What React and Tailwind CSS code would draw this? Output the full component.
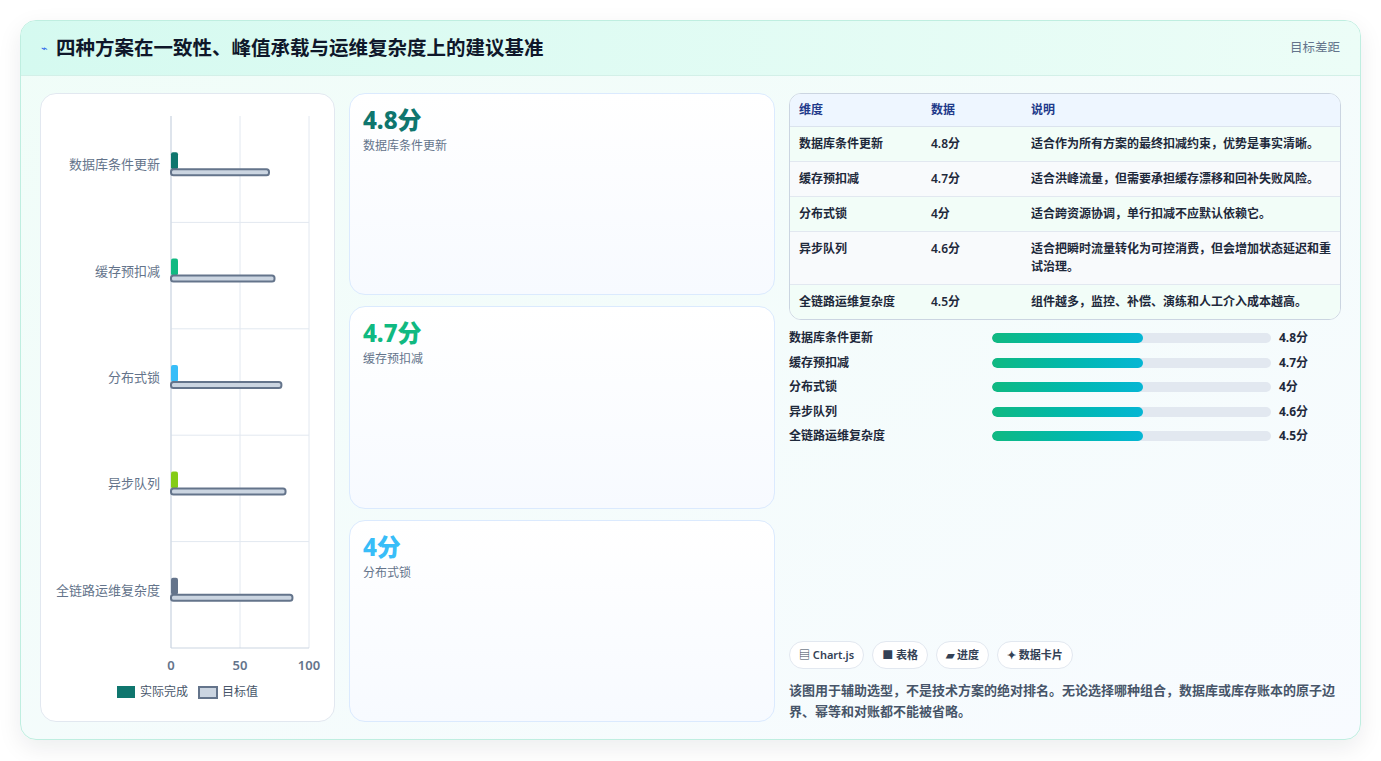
import React from "react";

const F = { fontFamily: '"Noto Sans","Noto Sans CJK SC",sans-serif' };
const rows = [
  ["数据库条件更新", "4.8分", "适合作为所有方案的最终扣减约束，优势是事实清晰。", "#0f766e", 71],
  ["缓存预扣减", "4.7分", "适合洪峰流量，但需要承担缓存漂移和回补失败风险。", "#10b981", 75],
  ["分布式锁", "4分", "适合跨资源协调，单行扣减不应默认依赖它。", "#38bdf8", 80],
  ["异步队列", "4.6分", "适合把瞬时流量转化为可控消费，但会增加状态延迟和重试治理。", "#84cc16", 83],
  ["全链路运维复杂度", "4.5分", "组件越多，监控、补偿、演练和人工介入成本越高。", "#64748b", 88],
];

function Chart() {
  const x0 = 130, w = 138, top = 22, rh = 106.4;
  return (
    <svg width="294" height="627" className="block">
      {[0, 50, 100].map((v) => (
        <line key={v} x1={x0 + v * 1.38} x2={x0 + v * 1.38} y1={top} y2={top + rh * 5} stroke="#e2e8f0" />
      ))}
      {[1, 2, 3, 4].map((i) => (
        <line key={i} x1={x0} x2={x0 + w} y1={top + rh * i} y2={top + rh * i} stroke="#e2e8f0" />
      ))}
      <line x1={x0} x2={x0 + w} y1={top + rh * 5} y2={top + rh * 5} stroke="#cbd5e1" />
      <line x1={x0} x2={x0} y1={top} y2={top + rh * 5} stroke="#cbd5e1" />
      {rows.map((r, i) => {
        const cy = top + rh * i + rh / 2;
        return (
          <g key={i}>
            <text x={x0 - 11} y={cy} textAnchor="end" fontSize="13" fill="#64748b" style={F}>{r[0]}</text>
            <rect x={x0} y={cy - 17} width="7" height="17" rx="2" fill={r[3]} />
            <rect x={x0} y={cy + 0} width={r[4] * 1.38} height="6" rx="2.5" fill="#cbd5e1" stroke="#64748b" strokeWidth="2" />
          </g>
        );
      })}
      {[0, 50, 100].map((v) => (
        <text key={v} x={x0 + v * 1.38} y={top + rh * 5 + 22} textAnchor="middle" fontSize="13" fontWeight="600" fill="#64748b" style={F}>{v}</text>
      ))}
      <rect x="76" y="592" width="18" height="12" fill="#0f766e" />
      <text x="99" y="602" fontSize="12" fill="#475569" style={F}>实际完成</text>
      <rect x="158" y="593" width="18" height="11" fill="#cbd5e1" stroke="#64748b" strokeWidth="2" />
      <text x="181" y="602" fontSize="12" fill="#475569" style={F}>目标值</text>
    </svg>
  );
}

export default function App() {
  const cards = [["4.8分", "数据库条件更新", "text-[#0f766e]"], ["4.7分", "缓存预扣减", "text-[#10b981]"], ["4分", "分布式锁", "text-[#38bdf8]"]];
  return (
    <div style={F} className="w-[1381px] h-[761px] bg-white p-5 pb-[21px]">
      <div className="h-full rounded-2xl border border-[#bfeee0] bg-gradient-to-br from-[#f0fdf8] to-[#f8fbff] shadow-[0_8px_24px_rgba(15,23,42,0.08)] overflow-hidden flex flex-col">
        <div className="h-[55px] shrink-0 flex items-center justify-between px-5 bg-gradient-to-r from-[#d5faf0] to-[#ecfdf7] border-b border-[#d3f0e8]">
          <div className="flex items-center gap-2">
            <span className="text-[#2563eb] text-[11px]">⌁</span>
            <span className="text-[19.5px] font-bold text-[#0f172a]">四种方案在一致性、峰值承载与运维复杂度上的建议基准</span>
          </div>
          <span className="text-[12.5px] text-[#64748b]">目标差距</span>
        </div>
        <div className="flex-1 flex gap-[14px] px-[19px] pt-[17px] pb-[18px]">
          <div className="w-[295px] rounded-2xl border border-[#e2e8f0] bg-white">
            <Chart />
          </div>
          <div className="w-[426px] flex flex-col gap-[11px]">
            {cards.map((c) => (
              <div key={c[0]} className="flex-1 rounded-2xl border border-[#dbeafe] bg-gradient-to-b from-white to-[#f7faff] px-[13px] py-[10px]">
                <div className={`text-[24px] font-extrabold leading-[32px] ${c[2]}`}>{c[0]}</div>
                <div className="text-[12px] text-[#64748b] mt-[1px]">{c[1]}</div>
              </div>
            ))}
          </div>
          <div className="flex-1 flex flex-col">
            <div className="rounded-xl border border-[#cbd5e1] overflow-hidden bg-white text-[12px] text-[#1e293b] font-semibold">
              <div className="flex h-[33px] items-center bg-[#eef6ff] text-[#1e3a8a] border-b border-[#dbe3ee]">
                <div className="w-[141px] pl-[9px]">维度</div><div className="w-[100px]">数据</div><div className="flex-1">说明</div>
              </div>
              {rows.map((r, i) => (
                <div key={i} className={`flex items-start py-[8px] leading-[18px] ${i < 4 ? "border-b border-[#e2e8f0]" : ""} ${i % 2 ? "bg-[#f8fafc]" : "bg-[#f2fdf8]"}`}>
                  <div className="w-[141px] pl-[9px]">{r[0]}</div><div className="w-[100px]">{r[1]}</div><div className="flex-1 pr-2">{r[2]}</div>
                </div>
              ))}
            </div>
            <div className="mt-[9px] flex flex-col gap-[6.5px]">
              {rows.map((r, i) => (
                <div key={i} className="flex items-center h-[18px] text-[12px] font-semibold text-[#1e293b]">
                  <div className="w-[203px]">{r[0]}</div>
                  <div className="w-[279px] h-[10px] rounded-full bg-[#e2e8f0] overflow-hidden">
                    <div className="w-[151px] h-full rounded-full bg-gradient-to-r from-[#10b981] to-[#06b6d4]" />
                  </div>
                  <div className="ml-2 font-bold">{r[1]}</div>
                </div>
              ))}
            </div>
            <div className="flex-1" />
            <div className="flex gap-2 text-[11px] font-semibold text-[#334155]">
              {["▤ Chart.js", "■ 表格", "▰ 进度", "✦ 数据卡片"].map((t) => (
                <span key={t} className="h-[28px] px-[9px] flex items-center rounded-full border border-[#e2e8f0] bg-white">{t}</span>
              ))}
            </div>
            <p className="mt-[11px] text-[13px] leading-[21px] text-[#475569] font-semibold">该图用于辅助选型，不是技术方案的绝对排名。无论选择哪种组合，数据库或库存账本的原子边界、幂等和对账都不能被省略。</p>
          </div>
        </div>
      </div>
    </div>
  );
}
